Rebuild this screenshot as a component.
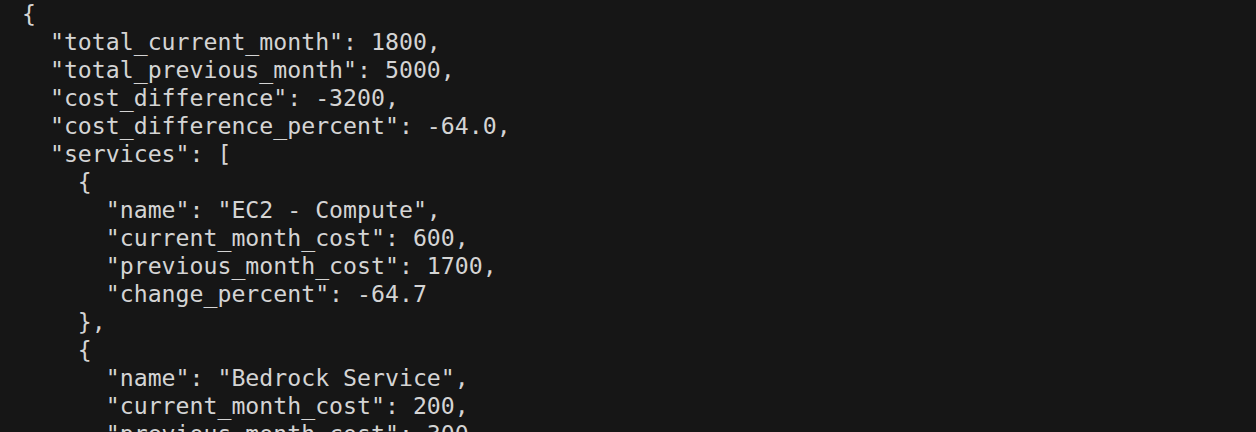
import React from "react";

const lines = [
  "{",
  '  "total_current_month": 1800,',
  '  "total_previous_month": 5000,',
  '  "cost_difference": -3200,',
  '  "cost_difference_percent": -64.0,',
  '  "services": [',
  "    {",
  '      "name": "EC2 - Compute",',
  '      "current_month_cost": 600,',
  '      "previous_month_cost": 1700,',
  '      "change_percent": -64.7',
  "    },",
  "    {",
  '      "name": "Bedrock Service",',
  '      "current_month_cost": 200,',
  '      "previous_month_cost": 300,',
];

const App: React.FC = () => {
  return (
    <div className="w-[1256px] h-[432px] overflow-hidden bg-[#161616] pl-[22px] pt-[0px]">
      <pre className="font-['DejaVu_Sans_Mono',monospace] text-[23.2px] leading-[28px] text-[#d4d4d4]">
        {lines.join("\n")}
      </pre>
    </div>
  );
};

export default App;
